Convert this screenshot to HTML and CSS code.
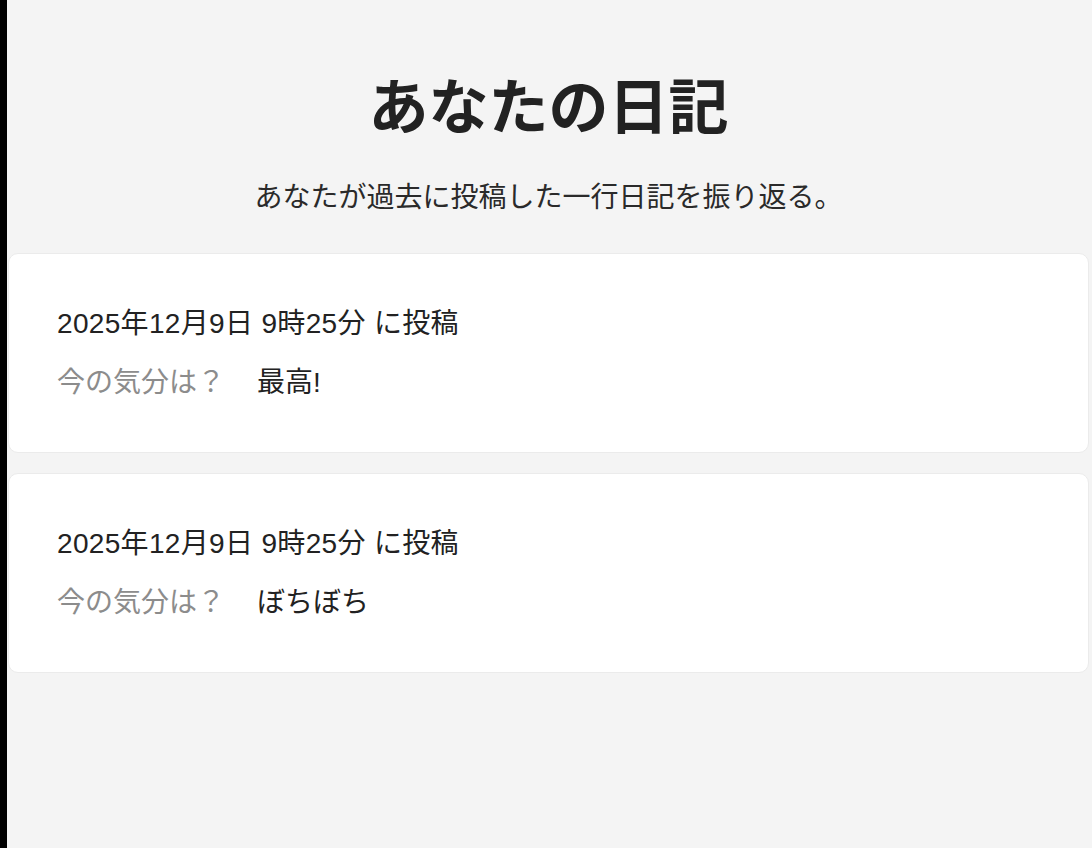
FILE: index.html
```html
<!DOCTYPE html>
<html lang="ja">
<head>
<meta charset="utf-8">
<title>あなたの日記</title>
<link rel="stylesheet" href="styles.css">
</head>
<body>
<div class="strip"></div>
<main class="page">
  <header class="header">
    <h1 class="title">あなたの日記</h1>
    <p class="subtitle">あなたが過去に投稿した一行日記を振り返る。</p>
  </header>
  <section class="list">
    <article class="card">
      <div class="date">2025年12月9日 9時25分 に投稿</div>
      <div class="mood"><span class="label">今の気分は？</span><span class="value">最高!</span></div>
    </article>
    <article class="card">
      <div class="date">2025年12月9日 9時25分 に投稿</div>
      <div class="mood"><span class="label">今の気分は？</span><span class="value">ぼちぼち</span></div>
    </article>
  </section>
</main>
</body>
</html>
```

FILE: styles.css
```css
html, body {
  margin: 0;
  padding: 0;
  height: 100%;
}
body {
  display: flex;
  background: #f4f4f4;
  font-family: "Noto Sans CJK JP", "Noto Sans", sans-serif;
  color: #222222;
}
.strip {
  width: 7px;
  flex: 0 0 7px;
  background: #000000;
  min-height: 848px;
}
.page {
  flex: 1;
  min-height: 848px;
  background: #f4f4f4;
  padding: 61px 3px 0 1px;
  box-sizing: border-box;
}
.header {
  text-align: center;
}
.title {
  margin: 0;
  font-size: 60px;
  line-height: 84px;
  font-weight: 700;
  color: #222222;
}
.subtitle {
  margin: 31px 0 0;
  font-size: 28px;
  line-height: 38px;
  color: #2a2a2a;
}
.list {
  margin-top: 39px;
  display: flex;
  flex-direction: column;
  gap: 20px;
}
.card {
  background: #ffffff;
  border: 1px solid #ebebeb;
  border-radius: 10px;
  padding: 48px 48px 47px;
  display: flex;
  flex-direction: column;
  gap: 15px;
  font-family: "Liberation Sans", "Noto Sans CJK JP", sans-serif;
}
.date {
  font-size: 28px;
  line-height: 44px;
  letter-spacing: 0.33px;
  color: #222222;
}
.mood {
  font-size: 28px;
  line-height: 44px;
  display: flex;
  gap: 32px;
}
.label {
  color: #8c8c8c;
}
.value {
  color: #222222;
}
```
